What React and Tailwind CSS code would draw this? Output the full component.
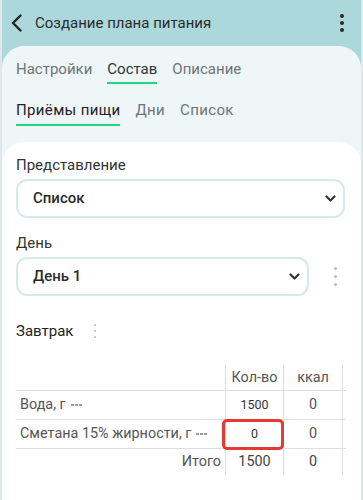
import React from "react";

const Kebab = ({ className = "", dot = "bg-[#333]", size = "w-[4px] h-[4px]", gap = "gap-[4px]" }) => (
  <div className={`flex flex-col items-center ${gap} ${className}`}>
    <span className={`${size} rounded-full ${dot}`} />
    <span className={`${size} rounded-full ${dot}`} />
    <span className={`${size} rounded-full ${dot}`} />
  </div>
);

const Chevron = () => (
  <svg width="11" height="7" viewBox="0 0 11 7" fill="none">
    <path d="M1.5 1.5l4 4 4-4" stroke="#333" strokeWidth="2.2" strokeLinecap="round" strokeLinejoin="round" />
  </svg>
);

const Dots = () => (
  <span className="inline-flex gap-[1px] ml-[5px] self-center">
    <span className="w-[3px] h-[2px] bg-[#9a9a9a]" />
    <span className="w-[3px] h-[2px] bg-[#9a9a9a]" />
    <span className="w-[3px] h-[2px] bg-[#9a9a9a]" />
  </span>
);

const cols = "grid grid-cols-[209px_58px_59px_4px]";
const vl = "border-l border-[#dcdfe1]";

export default function App() {
  return (
    <div
      className="w-[363px] h-[500px] overflow-hidden bg-[#acd8dc] border-x-[2px] border-[#e1e8e9] flex flex-col"
      style={{ fontFamily: 'Roboto, "Open Sans", sans-serif' }}
    >
      {/* Header */}
      <div className="h-[46px] flex items-center pl-[8px] pr-[17px] shrink-0">
        <svg width="14" height="18" viewBox="0 0 14 18" fill="none">
          <path d="M10.5 1.5L3 9l7.5 7.5" stroke="#222" strokeWidth="2.4" strokeLinecap="round" strokeLinejoin="round" />
        </svg>
        <div className="ml-[11px] text-[15px] leading-[20px] text-[#2b2b2b]">Создание плана питания</div>
        <div className="flex-1" />
        <Kebab size="w-[4px] h-[4px]" gap="gap-[3px]" dot="bg-[#2b2b2b]" />
      </div>

      {/* Card 1 */}
      <div className="flex-1 bg-[#eef6f7] rounded-t-[22px] flex flex-col">
        <div className="flex items-start gap-[15px] pl-[14px] pt-[13px] text-[15px] leading-[20px]">
          <div className="text-[#6f7478] pb-[5px]">Настройки</div>
          <div className="text-[#2f3336] pb-[3px] border-b-[2px] border-[#22d67c]">Состав</div>
          <div className="text-[#6f7478] pb-[5px]">Описание</div>
        </div>
        <div className="flex items-start gap-[15px] pl-[14px] pt-[16px] text-[15px] leading-[20px] tracking-[0.35px]">
          <div className="text-[#1f2326] pb-[4px] border-b-[2px] border-[#22d67c]">Приёмы пищи</div>
          <div className="text-[#6f7478] pb-[6px]">Дни</div>
          <div className="text-[#6f7478] pb-[6px]">Список</div>
        </div>

        {/* Card 2 */}
        <div className="mt-[16px] flex-1 bg-white rounded-t-[22px] pl-[14px] pr-[14px] pt-[13px]">
          <div className="text-[15px] leading-[20px] text-[#333]">Представление</div>
          <div className="mt-[4px] h-[39px] w-[329px] border-[2px] border-[#d6eaee] rounded-[11px] flex items-center pl-[15px] pr-[7px]">
            <span className="text-[15px] font-medium text-[#2b2b2b]">Список</span>
            <div className="flex-1" />
            <Chevron />
          </div>

          <div className="mt-[15px] text-[15px] leading-[20px] text-[#333]">День</div>
          <div className="mt-[4px] flex items-center">
            <div className="h-[39px] w-[293px] border-[2px] border-[#d6eaee] rounded-[11px] flex items-center pl-[15px] pr-[7px]">
              <span className="text-[15px] font-medium text-[#2b2b2b]">День 1</span>
              <div className="flex-1" />
              <Chevron />
            </div>
            <Kebab className="ml-[25px]" size="w-[3px] h-[3px]" gap="gap-[5px]" dot="bg-[#b8bcbf]" />
          </div>

          <div className="mt-[25px] flex items-center h-[20px]">
            <span className="text-[15px] leading-[20px] text-[#222]">Завтрак</span>
            <Kebab className="ml-[21px]" size="w-[2px] h-[2px]" gap="gap-[4px]" dot="bg-[#b8bcbf]" />
          </div>

          {/* Table */}
          <div className="mt-[24px] w-[330px] text-[14.4px] text-[#555]">
            <div className={`${cols} h-[26px] border-b border-[#dcdfe1]`}>
              <div />
              <div className={`${vl} flex items-center justify-center`}>Кол-во</div>
              <div className={`${vl} flex items-center justify-center`}>ккал</div>
              <div className={vl} />
            </div>
            <div className={`${cols} h-[29px] border-b border-[#dcdfe1]`}>
              <div className="flex items-center pl-[4px]">Вода, г<Dots /></div>
              <div className={`${vl} flex items-center justify-center text-[12.5px] text-[#333]`}>1500</div>
              <div className={`${vl} flex items-center justify-center`}>0</div>
              <div className={vl} />
            </div>
            <div className={`${cols} h-[29px] border-b border-[#dcdfe1]`}>
              <div className="flex items-center pl-[4px] whitespace-nowrap">Сметана 15% жирности, г<Dots /></div>
              <div className={`relative ${vl} flex items-center justify-center text-[12.5px] text-[#333]`}>
                <div className="absolute left-[-4px] right-[-1px] top-[-1px] bottom-[-2px] border-[3px] border-[#e53935] rounded-[5px]" />
                0
              </div>
              <div className={`${vl} flex items-center justify-center`}>0</div>
              <div className={vl} />
            </div>
            <div className={`${cols} h-[26px]`}>
              <div className="flex items-center justify-end pr-[4px]">Итого</div>
              <div className={`${vl} flex items-center justify-center text-[#444]`}>1500</div>
              <div className={`${vl} flex items-center justify-center text-[#444]`}>0</div>
              <div className={vl} />
            </div>
          </div>
        </div>
      </div>
    </div>
  );
}
